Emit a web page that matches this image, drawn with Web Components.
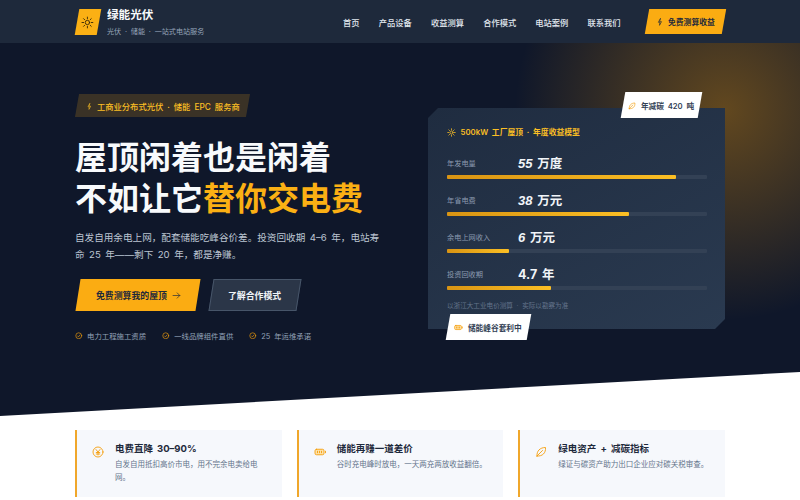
<!DOCTYPE html>
<html lang="zh">
<head>
<meta charset="utf-8">
<title>绿能光伏</title>
<style>
  html, body { margin: 0; height: 500px; overflow: hidden; background: #fff; }
  body { font-family: Inter, "Noto Sans CJK SC", sans-serif; word-spacing: 1.8px; }
</style>
</head>
<body>
<site-header></site-header>
<hero-section></hero-section>
<feature-row>
  <feature-card icon="yen" heading="电费直降 30–90%">自发自用抵扣高价市电，用不完余电卖给电网。</feature-card>
  <feature-card icon="battery" heading="储能再赚一道差价">谷时充电峰时放电，一天两充两放收益翻倍。</feature-card>
  <feature-card icon="leaf" heading="绿电资产 + 减碳指标">绿证与碳资产助力出口企业应对碳关税审查。</feature-card>
</feature-row>

<script>
const ICONS = {
  sun: '<circle cx="12" cy="12" r="4"/><path d="M12 2v3M12 19v3M2 12h3M19 12h3M4.9 4.9l2.1 2.1M17 17l2.1 2.1M4.9 19.1L7 17M17 7l2.1-2.1"/>',
  bolt: '<path d="M13 2L7 13h4.5l-1 9 6-11H12z"/>',
  check: '<circle cx="12" cy="12" r="9.5"/><path d="M8 12.5l3 3 5-6"/>',
  leaf: '<path d="M4 20C3 10 10 3 21 3c1 11-6 18-17 17z"/><path d="M4 20L15 9"/>',
  yen: '<circle cx="12" cy="12" r="10"/><path d="M8 7l4 5 4-5M12 12v6M8.5 13h7M8.5 16h7"/>',
  battery: '<rect x="2" y="6.5" width="18" height="11" rx="3" fill="#fde3ac"/><path d="M23 10.5v3M7 10.5v3M11 10.5v3M15 10.5v3"/>',
  arrow: '<path d="M3 12h18M14 5l7 7-7 7"/>'
};

class SvgIcon extends HTMLElement {
  connectedCallback() {
    const size = this.getAttribute("size") || 10;
    const width = this.getAttribute("stroke") || 2;
    this.attachShadow({ mode: "open" }).innerHTML = `
      <style>
        :host { display: inline-flex; flex: none; color: inherit; }
        svg { display: block; fill: none; stroke: currentColor; stroke-linecap: round; stroke-linejoin: round; }
      </style>
      <svg width="${size}" height="${size}" viewBox="0 0 24 24" stroke-width="${width}">${ICONS[this.getAttribute("name")]}</svg>`;
  }
}
customElements.define("svg-icon", SvgIcon);

class SiteHeader extends HTMLElement {
  constructor() {
    super();
    this.attachShadow({ mode: "open" }).innerHTML = `
      <style>
        :host { display: flex; height: 43px; background: #1e293b; justify-content: center; }
        .inner { width: 650px; display: flex; align-items: center; }
        .mark { width: 21.5px; height: 26px; margin-left: 1.5px; background: #fbb014; transform: skewX(-10deg); display: flex; align-items: center; justify-content: center; color: #3b2a08; }
        .mark svg-icon { transform: skewX(10deg); }
        .brand { margin-left: 9px; display: flex; flex-direction: column; gap: 4px; margin-top: 1px; }
        .name { font-size: 11.6px; line-height: 15px; font-weight: 700; color: #f8fafc; }
        .sub { font-size: 7.1px; line-height: 10px; color: #94a3b8; }
        nav { margin-left: auto; display: flex; gap: 19.2px; font-size: 8.25px; font-weight: 500; color: #e2e8f0; }
        .cta { margin-left: 26px; margin-right: 2px; width: 76.5px; height: 25px; background: #fbac12; transform: skewX(-10deg); display: flex; align-items: center; justify-content: center; }
        .cta span { transform: skewX(10deg); display: flex; align-items: center; gap: 4px; font-size: 7.8px; font-weight: 700; color: #1e293b; white-space: nowrap; }
      </style>
      <div class="inner">
        <div class="mark"><svg-icon name="sun" size="13" stroke="1.7"></svg-icon></div>
        <div class="brand"><div class="name">绿能光伏</div><div class="sub">光伏 · 储能 · 一站式电站服务</div></div>
        <nav><span>首页</span><span>产品设备</span><span>收益测算</span><span>合作模式</span><span>电站案例</span><span>联系我们</span></nav>
        <div class="cta"><span><svg-icon name="bolt" size="8"></svg-icon>免费测算收益</span></div>
      </div>`;
  }
}
customElements.define("site-header", SiteHeader);

class MetricRow extends HTMLElement {
  constructor() {
    super();
    this.attachShadow({ mode: "open" }).innerHTML = `
      <style>
        :host { display: block; }
        .line { display: grid; grid-template-columns: 71px 1fr; align-items: center; height: 20px; }
        .label { font-size: 7.2px; line-height: 10px; padding-top: 4px; color: #8c9bb0; }
        .value { font-size: 12.5px; font-weight: 700; color: #f1f5f9; }
        ::slotted(i) { font-family: "Liberation Sans", sans-serif; font-size: 13px; }
        .track { height: 3.5px; margin-top: 3px; background: #334155; border-radius: 1px; }
        .fill { height: 100%; background: linear-gradient(90deg, #d99413, #fbbf24); border-radius: 1px; }
      </style>
      <div class="line"><span class="label"></span><span class="value"><slot></slot></span></div>
      <div class="track"><div class="fill"></div></div>`;
  }
  connectedCallback() {
    this.shadowRoot.querySelector(".label").textContent = this.getAttribute("label");
    this.shadowRoot.querySelector(".fill").style.width = this.getAttribute("fill");
  }
}
customElements.define("metric-row", MetricRow);

class YieldPanel extends HTMLElement {
  constructor() {
    super();
    this.attachShadow({ mode: "open" }).innerHTML = `
      <style>
        :host { display: block; position: relative; width: 297px; height: 221px; }
        .card { box-sizing: border-box; height: 100%; padding: 17px 18px 0 19px; background: linear-gradient(150deg, #1f2c40, #2a3a50); clip-path: polygon(10px 0, 100% 0, 100% calc(100% - 10px), calc(100% - 10px) 100%, 0 100%, 0 10px); }
        .title { display: flex; align-items: center; gap: 4.5px; font-size: 7.8px; line-height: 14px; font-weight: 600; color: #fbbf24; }
        .rows { margin-top: 13px; display: flex; flex-direction: column; gap: 10.5px; }
        .note { margin-top: 11.5px; font-size: 6.6px; line-height: 10px; color: #64748b; }
        .tag { position: absolute; height: 26px; background: #fff; transform: skewX(-10deg); display: flex; align-items: center; justify-content: center; }
        .tag span { transform: skewX(10deg); display: flex; align-items: center; gap: 5px; font-size: 7.7px; font-weight: 600; color: #334155; white-space: nowrap; }
        .tag svg-icon { color: #f59e0b; }
        .top { right: 26px; top: -16px; width: 76.5px; }
        .bottom { left: 20px; bottom: -11px; width: 80.5px; }
      </style>
      <div class="card">
        <div class="title"><svg-icon name="sun" size="9"></svg-icon>500kW 工厂屋顶 · 年度收益模型</div>
        <div class="rows"><slot></slot></div>
        <div class="note">以浙江大工业电价测算 · 实际以勘察为准</div>
      </div>
      <div class="tag top"><span><svg-icon name="leaf" size="8"></svg-icon>年减碳 420 吨</span></div>
      <div class="tag bottom"><span><svg-icon name="battery" size="9"></svg-icon>储能峰谷套利中</span></div>`;
  }
}
customElements.define("yield-panel", YieldPanel);

class HeroSection extends HTMLElement {
  constructor() {
    super();
    this.attachShadow({ mode: "open" }).innerHTML = `
      <style>
        :host { display: block; height: 373px; clip-path: polygon(0 0, 100% 0, 100% 329px, 0 100%);
          background: radial-gradient(circle 210px at 725px 67px, rgba(245,158,11,.36), rgba(245,158,11,0) 100%), #0f172a; }
        .inner { width: 650px; margin: 0 auto; display: flex; justify-content: space-between; }
        .left { width: 330px; padding-top: 51px; }
        .badge { margin-left: 2px; width: 171px; height: 23px; background: #3a3226; transform: skewX(-10deg); display: flex; align-items: center; justify-content: center; }
        .badge span { transform: skewX(10deg); display: flex; align-items: center; gap: 4px; font-size: 8.3px; font-weight: 500; color: #fbbf24; white-space: nowrap; }
        h1 { margin: 20px 0 0; font-size: 32px; line-height: 41px; font-weight: 700; color: #f8fafc; white-space: nowrap; }
        h1 em { font-style: normal; color: #fbb014; }
        p { margin: 10px 0 0; width: 312px; font-size: 9.6px; line-height: 17px; color: #bcc5d2; }
        .actions { margin-top: 16px; display: flex; gap: 13px; margin-left: 2.5px; }
        .btn { height: 32px; transform: skewX(-9deg); display: flex; align-items: center; justify-content: center; box-sizing: border-box; }
        .btn span { transform: skewX(9deg); display: flex; gap: 5px; align-items: center; white-space: nowrap; font-size: 8.9px; font-weight: 700; }
        .primary { width: 120px; background: #fbac12; color: #1e293b; }
        .secondary { width: 88px; background: #2b3648; border: 1px solid #475569; color: #f1f5f9; }
        .checks { margin-top: 19px; display: flex; gap: 16px; font-size: 7.4px; color: #94a3b8; }
        .checks span { display: flex; align-items: center; gap: 4.5px; }
        .checks svg-icon { color: #f59e0b; }
        .right { padding: 65px 0 0; }
      </style>
      <div class="inner">
        <div class="left">
          <div class="badge"><span><svg-icon name="bolt" size="7"></svg-icon>工商业分布式光伏 · 储能 EPC 服务商</span></div>
          <h1>屋顶闲着也是闲着<br>不如让它<em>替你交电费</em></h1>
          <p>自发自用余电上网，配套储能吃峰谷价差。投资回收期 4–6 年，电站寿命 25 年——剩下 20 年，都是净赚。</p>
          <div class="actions">
            <div class="btn primary"><span>免费测算我的屋顶<svg-icon name="arrow" size="9" stroke="1.8"></svg-icon></span></div>
            <div class="btn secondary"><span>了解合作模式</span></div>
          </div>
          <div class="checks">
            <span><svg-icon name="check" size="7.5"></svg-icon>电力工程施工资质</span>
            <span><svg-icon name="check" size="7.5"></svg-icon>一线品牌组件直供</span>
            <span><svg-icon name="check" size="7.5"></svg-icon>25 年运维承诺</span>
          </div>
        </div>
        <div class="right">
          <yield-panel>
            <metric-row label="年发电量" fill="88%"><i>55</i> 万度</metric-row>
            <metric-row label="年省电费" fill="70%"><i>38</i> 万元</metric-row>
            <metric-row label="余电上网收入" fill="24%"><i>6</i> 万元</metric-row>
            <metric-row label="投资回收期" fill="40%">4.7 年</metric-row>
          </yield-panel>
        </div>
      </div>`;
  }
}
customElements.define("hero-section", HeroSection);

class FeatureRow extends HTMLElement {
  constructor() {
    super();
    this.attachShadow({ mode: "open" }).innerHTML = `
      <style>
        :host { display: grid; grid-template-columns: repeat(3, 1fr); gap: 15px; width: 650px; margin: 14px auto 0; }
      </style>
      <slot></slot>`;
  }
}
customElements.define("feature-row", FeatureRow);

class FeatureCard extends HTMLElement {
  constructor() {
    super();
    this.attachShadow({ mode: "open" }).innerHTML = `
      <style>
        :host { display: flex; gap: 11px; box-sizing: border-box; height: 67px; padding: 12px 14px 0 15px; background: #f6f8fc; border-left: 2px solid #f0a72b; }
        svg-icon { color: #f59e0b; margin-top: 3px; }
        h3 { margin: 0; font-size: 9.5px; line-height: 14px; font-weight: 700; color: #1e293b; }
        div { margin-top: 2px; font-size: 7.5px; line-height: 13px; color: #64748b; }
      </style>
      <span class="ic"></span>
      <section><h3></h3><div><slot></slot></div></section>`;
  }
  connectedCallback() {
    this.shadowRoot.querySelector("h3").textContent = this.getAttribute("heading");
    this.shadowRoot.querySelector(".ic").innerHTML = `<svg-icon name="${this.getAttribute("icon")}" size="12" stroke="1.8"></svg-icon>`;
  }
}
customElements.define("feature-card", FeatureCard);
</script>
</body>
</html>
